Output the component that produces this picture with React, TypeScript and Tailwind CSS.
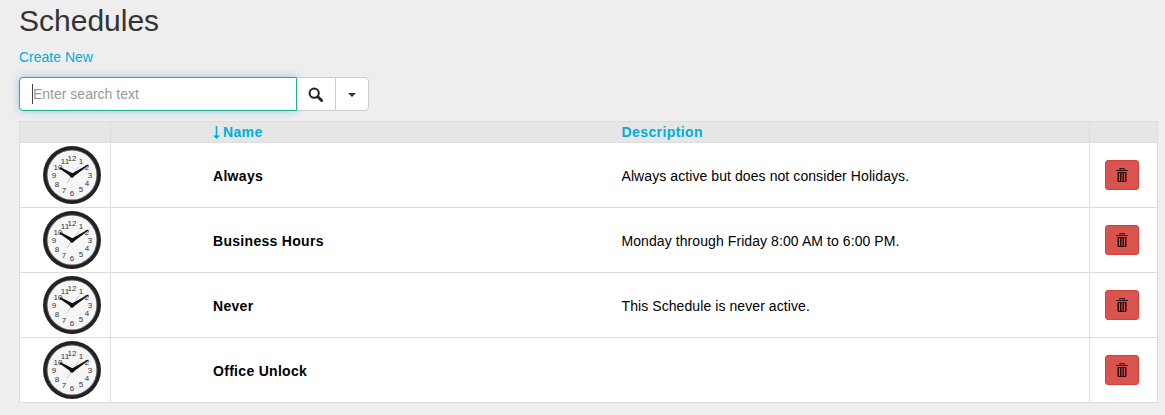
const schedules = [
  { name: 'Always', description: 'Always active but does not consider Holidays.' },
  { name: 'Business Hours', description: 'Monday through Friday 8:00 AM to 6:00 PM.' },
  { name: 'Never', description: 'This Schedule is never active.' },
  { name: 'Office Unlock', description: '' },
]

// offsets from the middle of the dial
const clockNumbers = [
  ['12', 0, -17], ['1', 9, -14], ['2', 15, -8], ['3', 18, 0], ['4', 15, 8], ['5', 9, 14],
  ['6', 0, 18], ['7', -8, 15], ['8', -15, 9], ['9', -18, 0], ['10', -14, -8], ['11', -7, -14],
] as const

function ClockIcon() {
  return (
    <svg width="58" height="58" viewBox="0 0 58 58">
      <circle cx="29" cy="29" r="29" fill="#222" />
      <circle cx="29" cy="29" r="25.5" fill="#55555a" />
      <circle cx="29" cy="29" r="24.5" fill="#f6f6f8" />
      {clockNumbers.map(([label, x, y]) => (
        <text
          key={label}
          x={29 + x}
          y={32 + y}
          textAnchor="middle"
          fontSize="8"
          fill="#333"
          fontFamily="Liberation Sans, sans-serif"
        >
          {label}
        </text>
      ))}
      <line x1="24" y1="37" x2="36" y2="20" stroke="#aaa" strokeWidth="0.6" />
      <path d="M30 27.500 17 21 16.500 22.500 28.500 31Z" fill="#111" />
      <path d="M28 28 45 18.500 45.500 19.500 30 31Z" fill="#111" />
      <circle cx="29" cy="29.500" r="2.200" fill="#111" />
    </svg>
  )
}

function SearchGlyph() {
  return (
    <svg width="15" height="15" viewBox="0 0 15 15" fill="none" stroke="#222" className="mr-[2px]">
      <circle cx="6.200" cy="6.200" r="4.600" strokeWidth="2" />
      <path d="M9.800 9.800 13.600 13.600" strokeWidth="2.800" strokeLinecap="round" />
    </svg>
  )
}

function SortArrow() {
  return (
    <svg width="7" height="13" viewBox="0 0 7 13" fill="currentColor" className="mr-[3px] inline-block align-[-2px]">
      <path d="M2.700 0h1.600v9.500H7L3.500 13 0 9.500h2.700z" />
    </svg>
  )
}

function TrashIcon() {
  return (
    <svg width="12" height="14" viewBox="0 0 12 14" fill="#2a0a0a">
      <path d="M3.500 0h5v2H12v1H0V2h3.500zM4.500 1v1h3V1z" />
      <path d="M1.500 4h9v9.200l-.8.800H2.300l-.8-.8zM3 5v8h1V5zM5.500 5v8h1V5zM8 5v8h1V5z" />
    </svg>
  )
}

export default function App() {
  return (
    <div className="h-[415px] overflow-hidden bg-[#eeeeee] pl-[19px] pr-[7px] font-['Liberation_Sans',Arial,sans-serif] text-sm">
      <h1 className="pt-[3px] text-[30px] leading-[36px] text-[#333]">Schedules</h1>
      <a className="mt-[8px] block leading-[20px] text-[#00aedb]">Create New</a>

      <div className="mt-[10px] flex h-[34px] w-[350px]">
        <div className="flex w-[278px] items-center rounded-l border border-[#1ab394] bg-white pl-[12px] shadow-[0_0_8px_rgba(102,175,233,0.6)]">
          <span className="h-[20px] w-px bg-[#444]" />
          <span className="text-[#999]">Enter search text</span>
        </div>
        <button className="flex w-[38px] items-center justify-center border-y border-[#ccc] bg-white">
          <SearchGlyph />
        </button>
        <button className="flex w-[34px] items-center justify-center rounded-r border border-[#ccc] bg-white">
          <span className="mt-[1px] border-x-4 border-t-4 border-x-transparent border-t-[#333]" />
        </button>
      </div>

      <table className="mt-[10px] w-[1139px] table-fixed border-collapse">
        <thead>
          <tr className="h-[21px] bg-[#e6e6e6] text-left font-bold leading-[20px] text-[#00aedb]">
            <th className="w-[91px] border border-[#dddddd]" />
            <th className="w-[511px] border-y border-[#dddddd] pl-[102px] tracking-[0.35px]">
              <SortArrow />
              Name
            </th>
            <th className="w-[468px] border-y border-[#dddddd] tracking-[0.4px]">Description</th>
            <th className="border border-[#dddddd]" />
          </tr>
        </thead>
        <tbody>
          {schedules.map((schedule) => (
            <tr key={schedule.name} className="h-[65px] bg-white text-black">
              <td className="border border-[#dddddd]">
                <div className="flex justify-center pl-[13px]">
                  <ClockIcon />
                </div>
              </td>
              <td className="border-y border-[#dddddd] pt-[1px] pl-[102px] font-bold tracking-[0.3px]">{schedule.name}</td>
              <td className="border-y border-[#dddddd] pt-[1px] tracking-[0.08px]">{schedule.description}</td>
              <td className="border border-[#dddddd]">
                <div className="flex justify-center pr-[3px]">
                  <button className="flex h-[30px] w-[34px] items-center justify-center rounded-[3px] border border-[#d43f3a] bg-[#d9534f]">
                    <TrashIcon />
                  </button>
                </div>
              </td>
            </tr>
          ))}
        </tbody>
      </table>
    </div>
  )
}
